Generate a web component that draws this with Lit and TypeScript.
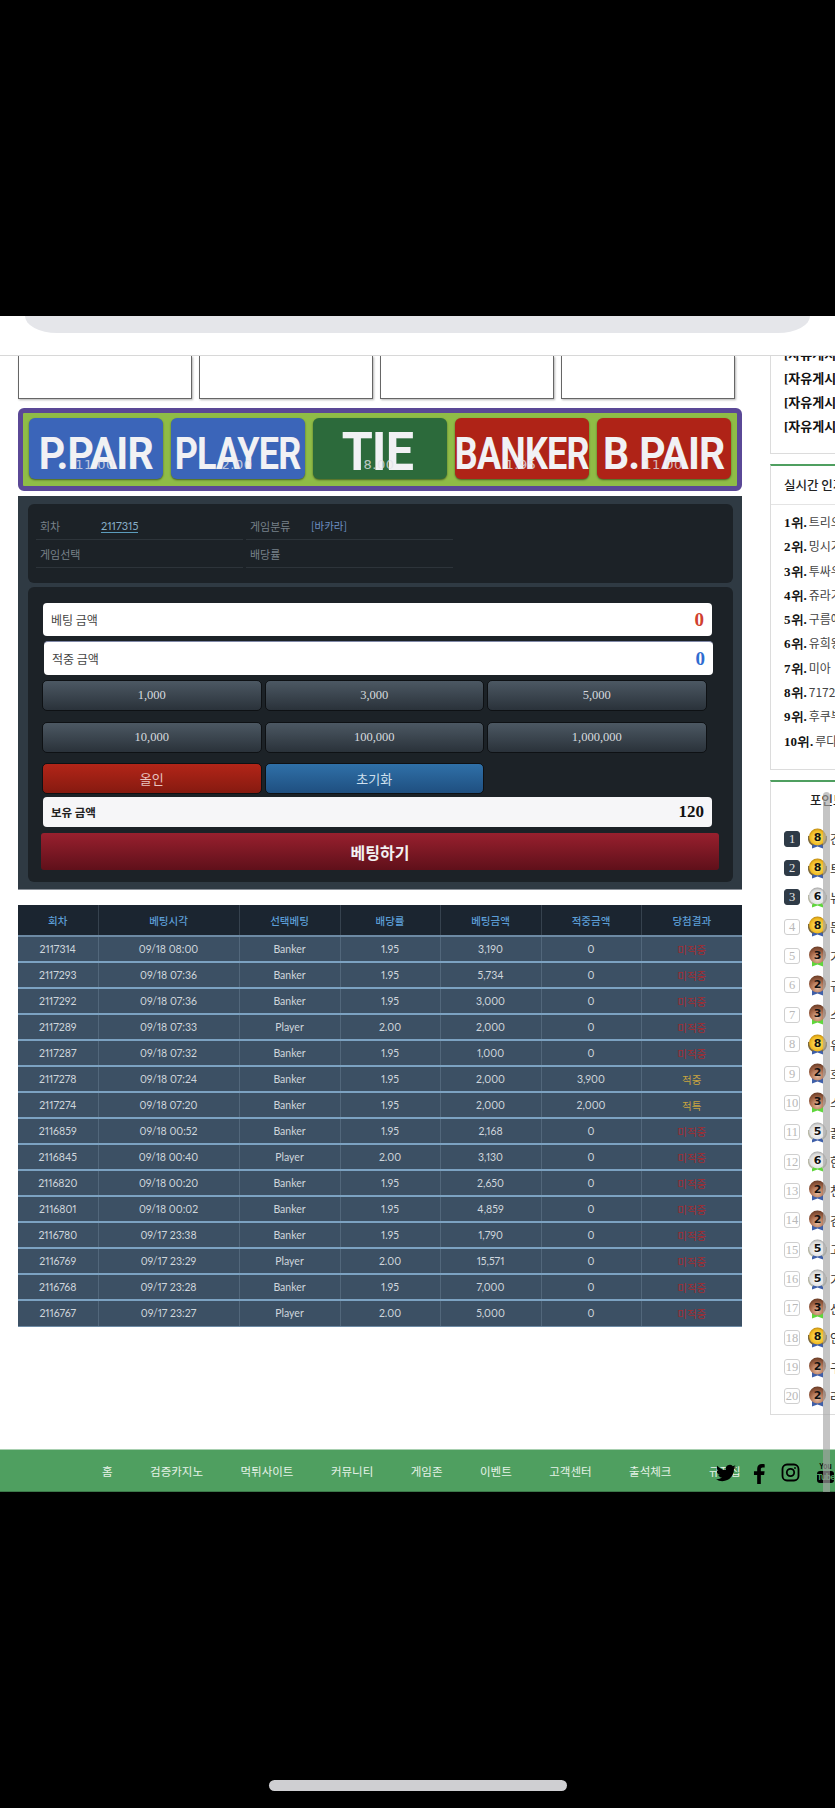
import { LitElement, html, css, svg, unsafeCSS } from "lit";
import { customElement } from "lit/decorators.js";

const KR = unsafeCSS(`"Noto Sans CJK KR", "Noto Sans", sans-serif`);

type Row = [string, string, string, string, string, string, string];
const rows: Row[] = [
  ["2117314", "09/18 08:00", "Banker", "1.95", "3,190", "0", "미적중"],
  ["2117293", "09/18 07:36", "Banker", "1.95", "5,734", "0", "미적중"],
  ["2117292", "09/18 07:36", "Banker", "1.95", "3,000", "0", "미적중"],
  ["2117289", "09/18 07:33", "Player", "2.00", "2,000", "0", "미적중"],
  ["2117287", "09/18 07:32", "Banker", "1.95", "1,000", "0", "미적중"],
  ["2117278", "09/18 07:24", "Banker", "1.95", "2,000", "3,900", "적중"],
  ["2117274", "09/18 07:20", "Banker", "1.95", "2,000", "2,000", "적특"],
  ["2116859", "09/18 00:52", "Banker", "1.95", "2,168", "0", "미적중"],
  ["2116845", "09/18 00:40", "Player", "2.00", "3,130", "0", "미적중"],
  ["2116820", "09/18 00:20", "Banker", "1.95", "2,650", "0", "미적중"],
  ["2116801", "09/18 00:02", "Banker", "1.95", "4,859", "0", "미적중"],
  ["2116780", "09/17 23:38", "Banker", "1.95", "1,790", "0", "미적중"],
  ["2116769", "09/17 23:29", "Player", "2.00", "15,571", "0", "미적중"],
  ["2116768", "09/17 23:28", "Banker", "1.95", "7,000", "0", "미적중"],
  ["2116767", "09/17 23:27", "Player", "2.00", "5,000", "0", "미적중"],
];

const bets = [
  { t: "P.PAIR", o: "11.00", c: "blue pair" },
  { t: "PLAYER", o: "2.00", c: "blue long" },
  { t: "TIE", o: "8.00", c: "green" },
  { t: "BANKER", o: "1.95", c: "red long" },
  { t: "B.PAIR", o: "11.00", c: "red pair" },
];

const popular = ["트리오", "밍시가", "투싸우", "쥬라기", "구름에", "유희왕", "미아", "71727", "후쿠부", "루다"];
const points: [number, string][] = [
  [8, "간"], [8, "트"], [6, "뉴"], [8, "돈"], [3, "가"], [2, "규"], [3, "스"], [8, "유"], [2, "호"], [3, "스"],
  [5, "꿀"], [6, "한"], [2, "천"], [2, "김"], [5, "고"], [5, "가"], [3, "산"], [8, "안"], [2, "구"], [2, "라"],
];
const navItems = ["홈", "검증카지노", "먹튀사이트", "커뮤니티", "게임존", "이벤트", "고객센터", "출석체크", "규정집"];

function medal(level: number) {
  const kind = level === 8 ? "gold" : level >= 5 ? "silver" : "bronze";
  const ribbon = level === 6 || level === 3 ? "#5fd63c" : "#3f5fa8";
  const laurel = kind === "gold" ? "#7d6a3c" : kind === "silver" ? "#b9b9a8" : "none";
  return html`<svg class="medal" width="19" height="21" viewBox="0 0 19 21">
    ${svg`
    <defs>
      <radialGradient id="gold" cx="50%" cy="55%" r="60%"><stop offset="0" stop-color="#fff07a"/><stop offset="0.7" stop-color="#f0b820"/><stop offset="1" stop-color="#a87810"/></radialGradient>
      <radialGradient id="silver" cx="50%" cy="60%" r="65%"><stop offset="0" stop-color="#ffffff"/><stop offset="0.7" stop-color="#dcdcdc"/><stop offset="1" stop-color="#8e8e8e"/></radialGradient>
      <radialGradient id="bronze" cx="50%" cy="75%" r="80%"><stop offset="0" stop-color="#e8bca0"/><stop offset="0.55" stop-color="#a8694a"/><stop offset="1" stop-color="#5e3420"/></radialGradient>
    </defs>
    <path d="M4 14 L15 14 L15 20.500 L9.500 18.500 L4 20.500 Z" fill=${ribbon}/>
    <path d="M1 8 Q0 14 5 17" fill="none" stroke=${laurel} stroke-width="2"/>
    <path d="M18 8 Q19 14 14 17" fill="none" stroke=${laurel} stroke-width="2"/>
    <circle cx="9.500" cy="9" r="8.500" fill="url(#${kind})"/>
    <text x="9.500" y="13" text-anchor="middle" class="medal-num">${level}</text>
    `}
  </svg>`;
}

@customElement("app-root")
export class AppRoot extends LitElement {
  static styles = css`
    :host {
      display: block;
      position: relative;
      width: 835px;
      height: 1808px;
      overflow: hidden;
      background: #000;
      font-family: ${KR};
    }
    .top-black { height: 316px; background: #000; }
    .browser { height: 39px; background: #fff; border-bottom: 1px solid #d8d8d8; }
    .pill { height: 17px; margin: 0 25px; background: #e5e6ea; border-radius: 0 0 32px 32px / 0 0 17px 17px; }

    .content { display: flex; height: 1093px; background: #fff; overflow: hidden; padding-left: 18px; box-sizing: border-box; }
    .main { flex: 0 0 724px; min-width: 0; display: flex; flex-direction: column; }
    .side { flex: 0 0 200px; margin-left: 28px; display: flex; flex-direction: column; gap: 10px; margin-top: -13px; }

    .cards { display: flex; gap: 7px; height: 43px; }
    .card { width: 174px; box-sizing: border-box; background: #fff; border: 1px solid #666; border-top: 0; box-shadow: 1px 1px 2px rgba(0,0,0,.3); }

    .betbar { margin-top: 9px; border: 5px solid #5a4896; border-radius: 6px; background: #8fbc46; padding: 5px 6px 7px; display: flex; gap: 8px; height: 61px; }
    .bet { position: relative; flex: 0 0 134px; min-width: 0; border-radius: 6px; box-shadow: 0 1px 2px rgba(0,0,0,.5); display: flex; align-items: center; justify-content: center; }
    .bet.blue { background: #3b65b9; }
    .bet.green { background: #2c6a3b; }
    .bet.red { background: #af2317; }
    .bet-t { display: block; font-family: Roboto, sans-serif; font-weight: 700; font-size: 45px; line-height: 61px; color: #f1f1f4; white-space: nowrap; letter-spacing: -1px; padding-top: 10px; }
    .bet.pair .bet-t { transform: scaleX(.91); }
    .bet.long .bet-t { transform: scaleX(.8); }
    .bet.green .bet-t { font-size: 54px; transform: scaleX(.93); padding-top: 6px; margin-right: 5px; }
    .bet-o { position: absolute; z-index: 1; left: 0; right: 2px; top: 38px; text-align: center; font-family: "DejaVu Sans", sans-serif; font-size: 13px; line-height: 18px; color: rgba(225,225,232,.8); letter-spacing: .5px; }

    .panel { margin-top: 5px; height: 394px; box-sizing: border-box; background: #2f3a43; padding: 8px 9px 0 10px; border-bottom: 1px solid #8a9098; }
    .inner { background: #1c2227; border-radius: 6px; }
    .info { height: 79px; box-sizing: border-box; padding: 8px 8px 0; display: grid; grid-template-columns: 207px 207px; column-gap: 3px; grid-auto-rows: 28px; }
    .cell { border-bottom: 1px solid #2d343a; display: flex; align-items: center; padding-left: 4px; font-size: 11px; color: #78818a; }
    .cell .lb { width: 61px; }
    .round { font-family: Lato, sans-serif; font-feature-settings: "pnum"; font-size: 11px; line-height: 13px; color: #88aec8; border-bottom: 1px solid #5c9cbc; }
    .game { color: #6d90c4; font-size: 10.5px; }

    .betting { margin-top: 4px; height: 295px; box-sizing: border-box; padding: 16px 0 0 15px; display: flex; flex-direction: column; }
    .amount { width: 669px; height: 33px; box-sizing: border-box; background: #fff; border-radius: 4px; display: flex; align-items: center; justify-content: space-between; padding: 0 8px; font-size: 12px; color: #444; }
    .amount.hit { height: 34px; margin-top: 5px; margin-left: 1px; border-top: 1px solid #8088a8; }
    .amount b { font-family: "Liberation Serif", serif; font-size: 19px; font-weight: 700; }
    .amount .r { color: #d0402f; }
    .amount .bl { color: #2f6cd0; }
    .chips { display: grid; grid-template-columns: repeat(3, 219.5px); column-gap: 3px; margin: 5px 0 0 -1px; grid-template-rows: 31px 31px 31px; row-gap: 10.5px; }
    .chip { box-sizing: border-box; border: 1px solid #0e1114; border-radius: 5px; background: linear-gradient(#4c5863, #2a323a); color: #d6dade; display: flex; align-items: center; justify-content: center; font-family: "Liberation Serif", serif; font-size: 12.5px; }
    .chip.allin { background: linear-gradient(#b22518, #861a10); color: #e8c4c0; font-family: ${KR}; font-size: 13px; }
    .chip.reset { background: linear-gradient(#2f70a8, #1f4f80); color: #cfe0ee; font-family: ${KR}; font-size: 13px; }
    .hold { width: 669px; height: 30px; box-sizing: border-box; margin-top: 3px; background: #f6f6f8; border-radius: 4px; display: flex; align-items: center; justify-content: space-between; padding: 0 8px; font-size: 11.5px; font-weight: 700; color: #222; }
    .hold b { font-family: "Liberation Serif", serif; font-size: 17px; color: #111; }
    .go { width: 678px; height: 37px; margin: 6px 0 0 -2px; border-radius: 3px; background: linear-gradient(#98202e, #5f101a); color: #f2f2f2; font-size: 16px; font-weight: 700; display: flex; align-items: center; justify-content: center; }

    table { margin-top: 15px; width: 724px; border-collapse: collapse; table-layout: fixed; }
    .c80 { width: 80px; }
    .c141 { width: 141px; }
    .c101 { width: 101px; }
    .c100 { width: 100px; }
    th { height: 30px; padding: 0; background: #1b2530; color: #5c9ed6; font-size: 10.5px; font-weight: 500; border-right: 1px solid #36424e; border-bottom: 2px solid #6d8aa4; }
    td { height: 26px; padding: 0; box-sizing: border-box; background: #3c5064; color: #cfd6dc; font-family: Lato, ${KR}; font-feature-settings: "pnum"; font-size: 10.5px; text-align: center; border-bottom: 2px solid #7ca2c2; border-right: 1px solid #52677b; }
    tr:last-child td { border-bottom: 1px solid #6d8aa4; }
    th:last-child, td:last-child { border-right: 0; }
    td.miss { color: #a42b30; font-family: ${KR}; font-size: 10.5px; }
    td.win { color: #c9a440; font-family: ${KR}; font-size: 10.5px; }

    .box { width: 200px; box-sizing: border-box; background: #fff; border: 1px solid #dcdcdc; border-right: 0; }
    .box.notice { border-top: 0; padding-bottom: 14px; }
    .notice-row { height: 24px; line-height: 24px; padding-left: 13px; font-family: "Liberation Serif", ${KR}; font-size: 13px; font-weight: 700; color: #111; white-space: nowrap; }
    .box.hot, .box.pts { border-top: 2px solid #4f9f60; }
    .hot-title { height: 38px; border-bottom: 1px solid #e4e4e4; line-height: 38px; padding-left: 13px; font-size: 12.5px; font-weight: 500; color: #222; white-space: nowrap; }
    .hot-list { padding: 5px 0 16px 13px; }
    .hot-row { height: 24.3px; line-height: 24.3px; font-size: 12px; color: #444; white-space: nowrap; }
    .hot-row b { font-family: "Liberation Serif", serif; font-size: 13px; color: #111; margin-right: 2px; }
    .pts-title { height: 42px; line-height: 36px; padding-left: 39px; font-size: 12.5px; font-weight: 500; color: #222; white-space: nowrap; }
    .pts-list { padding: 0 0 3px 13px; }
    .pt-row { height: 29.37px; display: flex; align-items: center; font-size: 12.5px; color: #333; }
    .rk { flex: 0 0 16px; height: 16px; box-sizing: border-box; border: 1px solid #cfcfcf; border-radius: 3px; color: #b8b8b8; background: #fff; font-family: "Liberation Serif", serif; font-size: 12.5px; line-height: 14px; text-align: center; margin-right: 8px; }
    .rk.top { background: #2f3b47; border-color: #2f3b47; color: #e6e6e6; }
    .medal { flex: 0 0 19px; margin-right: 3px; }
    .medal-num { font-family: "DejaVu Sans", sans-serif; font-size: 11px; font-weight: 700; fill: #111; }

    .footer { position: relative; height: 43px; box-sizing: border-box; background: #4f9f60; border-top: 1px solid #a8d0b0; border-bottom: 1px solid #3c7a4a; display: flex; align-items: center; padding-left: 102px; gap: 37.5px; }
    .nav { font-size: 11.5px; color: #e6f2e8; white-space: nowrap; }
    .social { position: absolute; top: 13px; display: block; }
    .tw { left: 716px; }
    .fb { left: 748px; }
    .ig { left: 781px; }
    .yt { position: absolute; left: 817px; top: 12px; width: 17px; text-align: center; font-family: "Liberation Sans", sans-serif; font-weight: 700; color: #000; line-height: 9px; }
    .yt .you { display: block; font-size: 8.5px; transform: scaleX(.8); }
    .yt .tube { display: block; font-size: 8.5px; line-height: 12px; background: #000; color: #4f9f60; border-radius: 3px; letter-spacing: -.5px; }

    .bottom { height: 316px; background: #000; display: flex; justify-content: center; padding-top: 288px; box-sizing: border-box; }
    .home { width: 298px; height: 11px; border-radius: 6px; background: #cfcfd2; }
    .scroll { position: absolute; left: 823px; top: 792px; width: 7px; height: 700px; background: rgba(165,165,165,.65); border-radius: 4px 4px 0 0; }
  `;

  render() {
    return html`
      <div class="top-black"></div>
      <div class="browser"><div class="pill"></div></div>
      <div class="content">
        <div class="main">
          <div class="cards">
            <div class="card"></div><div class="card"></div><div class="card"></div><div class="card"></div>
          </div>
          <div class="betbar">
            ${bets.map(
              (b) => html`<div class="bet ${b.c}"><span class="bet-t">${b.t}</span><span class="bet-o">${b.o}</span></div>`
            )}
          </div>
          <div class="panel">
            <div class="inner info">
              <div class="cell"><span class="lb">회차</span><span class="round">2117315</span></div>
              <div class="cell"><span class="lb">게임분류</span><span class="game">[바카라]</span></div>
              <div class="cell"><span class="lb">게임선택</span></div>
              <div class="cell"><span class="lb">배당률</span></div>
            </div>
            <div class="inner betting">
              <div class="amount"><span>베팅 금액</span><b class="r">0</b></div>
              <div class="amount hit"><span>적중 금액</span><b class="bl">0</b></div>
              <div class="chips">
                <div class="chip">1,000</div><div class="chip">3,000</div><div class="chip">5,000</div>
                <div class="chip">10,000</div><div class="chip">100,000</div><div class="chip">1,000,000</div>
                <div class="chip allin">올인</div><div class="chip reset">초기화</div>
              </div>
              <div class="hold"><span>보유 금액</span><b>120</b></div>
              <div class="go">베팅하기</div>
            </div>
          </div>
          <table>
            <colgroup>
              <col class="c80" /><col class="c141" /><col class="c101" /><col class="c100" />
              <col class="c101" /><col class="c100" /><col class="c101" />
            </colgroup>
            <thead>
              <tr><th>회차</th><th>베팅시각</th><th>선택베팅</th><th>배당률</th><th>베팅금액</th><th>적중금액</th><th>당첨결과</th></tr>
            </thead>
            <tbody>
              ${rows.map(
                (r) => html`<tr>
                  ${r.slice(0, 6).map((c) => html`<td>${c}</td>`)}
                  <td class=${r[6] === "미적중" ? "miss" : "win"}>${r[6]}</td>
                </tr>`
              )}
            </tbody>
          </table>
        </div>
        <div class="side">
          <div class="box notice">
            ${[0, 1, 2, 3].map(() => html`<div class="notice-row">[자유게시판]</div>`)}
          </div>
          <div class="box hot">
            <div class="hot-title">실시간 인기</div>
            <div class="hot-list">
              ${popular.map((n, i) => html`<div class="hot-row"><b>${i + 1}위.</b>${n}</div>`)}
            </div>
          </div>
          <div class="box pts">
            <div class="pts-title">포인트</div>
            <div class="pts-list">
              ${points.map(
                ([lv, n], i) => html`<div class="pt-row">
                  <span class="rk ${i < 3 ? "top" : ""}">${i + 1}</span>${medal(lv)}<span>${n}</span>
                </div>`
              )}
            </div>
          </div>
        </div>
      </div>
      <div class="footer">
        ${navItems.map((n) => html`<span class="nav">${n}</span>`)}
        <svg class="social tw" width="20" height="20" viewBox="0 0 24 24" fill="#000"><path d="M23.953 4.57a10 10 0 01-2.825.775 4.958 4.958 0 002.163-2.723c-.951.555-2.005.959-3.127 1.184a4.92 4.92 0 00-8.384 4.482C7.69 8.095 4.067 6.13 1.64 3.162a4.822 4.822 0 00-.666 2.475c0 1.71.87 3.213 2.188 4.096a4.904 4.904 0 01-2.228-.616v.06a4.923 4.923 0 003.946 4.827 4.996 4.996 0 01-2.212.085 4.936 4.936 0 004.604 3.417 9.867 9.867 0 01-6.102 2.105c-.39 0-.779-.023-1.17-.067a13.995 13.995 0 007.557 2.209c9.053 0 13.998-7.496 13.998-13.985 0-.21 0-.42-.015-.63A9.935 9.935 0 0024 4.59z"/></svg>
        <svg class="social fb" width="22" height="22" viewBox="0 0 24 24" fill="#000"><path d="M14 23v-10h3.6l.5-4H14V6.8c0-1.2.4-2 2-2h2.200V1.300C17.700 1.200 16.500 1 15.200 1 12 1 10 3 10 6.300V9H6.500v4H10v10z"/></svg>
        <svg class="social ig" width="19" height="19" viewBox="0 0 19 19" fill="none" stroke="#000" stroke-width="1.8"><rect x="1.500" y="1.500" width="16" height="16" rx="4.500"/><circle cx="9.500" cy="9.500" r="3.700"/><circle cx="14" cy="5" r=".9" fill="#000" stroke="none"/></svg>
        <div class="yt"><span class="you">You</span><span class="tube">Tube</span></div>
      </div>
      <div class="bottom"><div class="home"></div></div>
      <div class="scroll"></div>
    `;
  }
}
